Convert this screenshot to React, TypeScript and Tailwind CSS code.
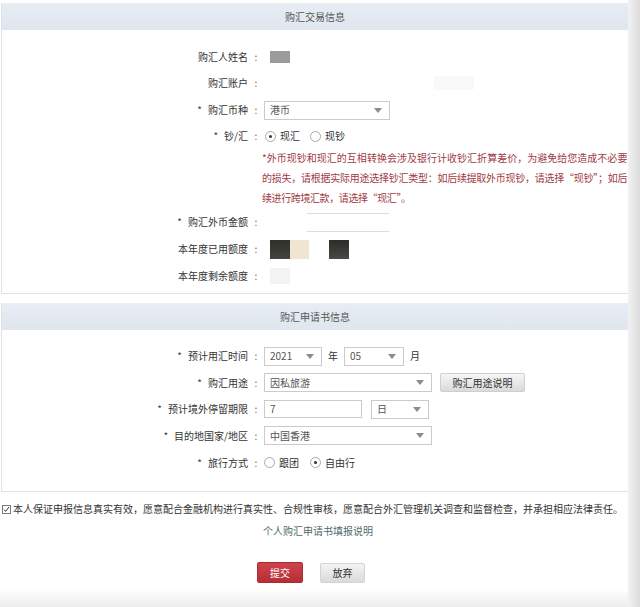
import type { ReactNode } from "react";

const Arrow = () => (
  <svg width="8" height="5" viewBox="0 0 8 5" className="shrink-0">
    <path d="M0 0h8L4 5z" fill="#8c8c8c" />
  </svg>
);

const Select = ({ w, value }: { w: string; value: string }) => (
  <div
    className={`${w} h-[19px] border border-[#cbcbcb] bg-white flex items-center justify-between pl-[5px] pr-[7px] text-[#555]`}
  >
    <span>{value}</span>
    <Arrow />
  </div>
);

const Radio = ({ checked, label }: { checked?: boolean; label: string }) => (
  <label className="flex items-center gap-[4px]">
    <span className="w-[11px] h-[11px] rounded-full border border-[#a9a9a9] bg-white flex items-center justify-center">
      {checked && <span className="w-[3px] h-[3px] rounded-full bg-[#333]" />}
    </span>
    <span>{label}</span>
  </label>
);

const Row = ({
  label,
  req,
  h,
  children,
}: {
  label: string;
  req?: boolean;
  h: string;
  children?: ReactNode;
}) => (
  <div className={`flex items-center ${h}`}>
    <div className="w-[246px] shrink-0 text-right whitespace-nowrap">
      {req && <span className="mr-[6px] text-[#444]">*</span>}
      {label}
    </div>
    <span className="w-[16px] shrink-0 text-center text-[#666]">:</span>
    <div className="flex items-center">{children}</div>
  </div>
);

const SectionHeader = ({ title }: { title: string }) => (
  <div className="h-[27px] bg-gradient-to-b from-[#e8edf4] to-[#dfe6ee] flex items-center justify-center text-[#555]">
    {title}
  </div>
);

export default function App() {
  return (
    <div className="w-[640px] h-[607px] bg-white flex overflow-hidden text-[10px] leading-none text-[#333] [font-family:'Noto_Sans_CJK_SC',sans-serif]">
      <div className="w-[628px] shrink-0 flex flex-col pt-[3px] bg-gradient-to-b from-white from-[97%] to-[#ececec]">
        {/* 购汇交易信息 */}
        <div className="border-l border-b border-[#e2e2e2] ml-[1px]">
          <SectionHeader title="购汇交易信息" />
          <div className="pt-[14px] pb-[3px]">
            <Row label="购汇人姓名" h="h-[26px]">
              <span className="ml-[6px] w-[20px] h-[12px] bg-[#9b9b9b]" />
            </Row>
            <Row label="购汇账户" h="h-[26px]">
              <span className="ml-[170px] w-[40px] h-[14px] bg-[#f9f9f9]" />
            </Row>
            <Row label="购汇币种" req h="h-[28px]">
              <Select w="w-[126px]" value="港币" />
            </Row>
            <Row label="钞/汇" req h="h-[24px]">
              <div className="flex items-center gap-[10px] ml-[1px]">
                <Radio checked label="现汇" />
                <Radio label="现钞" />
              </div>
            </Row>
            <div className="ml-[260px] w-[365px] leading-[20px] text-[#a13a45] whitespace-nowrap tracking-[-0.4px]">
              <div className="text-justify [text-align-last:justify]">
                *外币现钞和现汇的互相转换会涉及银行计收钞汇折算差价，为避免给您造成不必要
              </div>
              <div className="text-justify [text-align-last:justify]">
                的损失，请根据实际用途选择钞汇类型：如后续提取外币现钞，请选择“现钞”；如后
              </div>
              <div>续进行跨境汇款，请选择“现汇”。</div>
            </div>
            <Row label="购汇外币金额" req h="h-[28px]">
              <span className="ml-[43px] w-[82px] h-[19px] border-y border-[#dedede]" />
            </Row>
            <Row label="本年度已用额度" h="h-[26px]">
              <div className="ml-[6px] flex items-center">
                <span className="w-[20px] h-[19px] bg-gradient-to-b from-[#2f2f2b] to-[#45453f]" />
                <span className="w-[19px] h-[19px] bg-[#efe5d2]" />
                <span className="ml-[20px] w-[20px] h-[19px] bg-gradient-to-b from-[#2c2c28] to-[#4a4a44]" />
              </div>
            </Row>
            <Row label="本年度剩余额度" h="h-[28px]">
              <span className="ml-[6px] w-[20px] h-[16px] bg-[#f3f3f3]" />
            </Row>
          </div>
        </div>

        {/* 购汇申请书信息 */}
        <div className="mt-[9px] border-l border-b border-[#e2e2e2] ml-[1px]">
          <SectionHeader title="购汇申请书信息" />
          <div className="pt-[13px] pb-[15px]">
            <Row label="预计用汇时间" req h="h-[26px]">
              <Select w="w-[58px]" value="2021" />
              <span className="ml-[6px] mr-[6px]">年</span>
              <Select w="w-[60px]" value="05" />
              <span className="ml-[6px]">月</span>
            </Row>
            <Row label="购汇用途" req h="h-[27px]">
              <Select w="w-[168px]" value="因私旅游" />
              <button className="ml-[8px] w-[85px] h-[19px] border border-[#cfcfcf] rounded-[2px] bg-gradient-to-b from-[#f6f6f6] to-[#dadada] text-[#333] text-[10px]">
                购汇用途说明
              </button>
            </Row>
            <Row label="预计境外停留期限" req h="h-[26px]">
              <div className="w-[98px] h-[18px] border border-[#cbcbcb] bg-white flex items-center pl-[5px] text-[#555]">
                7
              </div>
              <div className="ml-[9px]">
                <Select w="w-[58px]" value="日" />
              </div>
            </Row>
            <Row label="目的地国家/地区" req h="h-[27px]">
              <Select w="w-[168px]" value="中国香港" />
            </Row>
            <Row label="旅行方式" req h="h-[27px]">
              <div className="flex items-center gap-[11px]">
                <Radio label="跟团" />
                <Radio checked label="自由行" />
              </div>
            </Row>
          </div>
        </div>

        {/* 声明 */}
        <div className="mt-[8px] h-[18px] flex items-center pl-[2px] whitespace-nowrap">
          <span className="w-[9px] h-[9px] border border-[#7a7a7a] bg-white flex items-center justify-center mr-[2px]">
            <svg width="7" height="7" viewBox="0 0 7 7">
              <path d="M1 3.6l1.6 1.8L6 1" fill="none" stroke="#333" strokeWidth="1" />
            </svg>
          </span>
          本人保证申报信息真实有效，愿意配合金融机构进行真实性、合规性审核，愿意配合外汇管理机关调查和监督检查，并承担相应法律责任。
        </div>
        <div className="mt-[8px] text-center text-[#4d6b6b] pl-[8px]">个人购汇申请书填报说明</div>

        <div className="mt-[26px] flex items-start pl-[257px]">
          <button className="w-[46px] h-[21px] rounded-[2px] border border-[#a92a31] bg-gradient-to-b from-[#d0434b] to-[#b52e36] text-white text-[10px]">
            提交
          </button>
          <button className="ml-[17px] mt-[1px] w-[45px] h-[20px] rounded-[2px] border border-[#d4d4d4] bg-gradient-to-b from-[#f4f4f4] to-[#dadada] text-[#333] text-[10px]">
            放弃
          </button>
        </div>
      </div>
      <div className="flex-1 bg-gradient-to-r from-[#f2f2f2] to-[#dcdcdc]" />
    </div>
  );
}
